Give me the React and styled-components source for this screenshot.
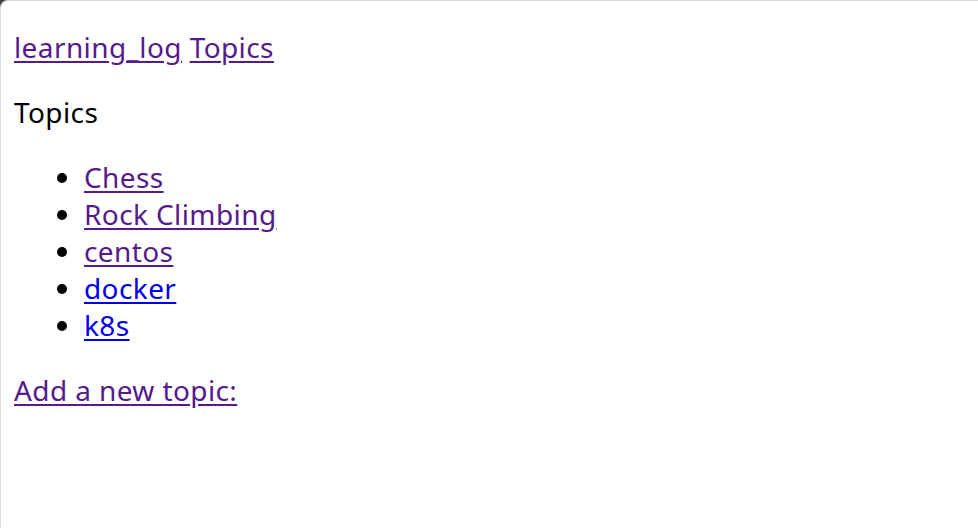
import styled, { createGlobalStyle } from "styled-components";

const GlobalStyle = createGlobalStyle`
  html {
    background: #3b3b3b;
  }
  body {
    margin: 0;
  }
`;

const Window = styled.div`
  box-sizing: border-box;
  min-height: 100vh;
  background: #ffffff;
  border-top: 1px solid #dadada;
  border-left: 1px solid #dadada;
  border-top-left-radius: 8px;
  padding: 0 13px;
  display: flow-root;
  font-family: "Noto Sans", "Noto Sans CJK SC", sans-serif;
  font-size: 28px;
  letter-spacing: 0.4px;
  line-height: 37px;
  color: #000;
`;

const Para = styled.p`
  margin: 28px 0;
`;

const Link = styled.a`
  color: ${(p) => (p.$visited ? "#551a8b" : "#0000ee")};
  text-decoration: underline;
  text-underline-offset: 3px;
`;

const List = styled.ul`
  margin: 28px 0;
  padding-left: 70px;
  list-style: disc;
`;

const topics = [
  { name: "Chess", visited: true },
  { name: "Rock Climbing", visited: true },
  { name: "centos", visited: true },
  { name: "docker", visited: false },
  { name: "k8s", visited: false },
];

export default function App() {
  return (
    <>
      <GlobalStyle />
      <Window>
        <Para>
          <Link $visited href="#">learning_log</Link>{" "}
          <Link $visited href="#">Topics</Link>
        </Para>
        <Para>Topics</Para>
        <List>
          {topics.map((t) => (
            <li key={t.name}>
              <Link $visited={t.visited} href="#">{t.name}</Link>
            </li>
          ))}
        </List>
        <Link $visited href="#">Add a new topic:</Link>
      </Window>
    </>
  );
}
